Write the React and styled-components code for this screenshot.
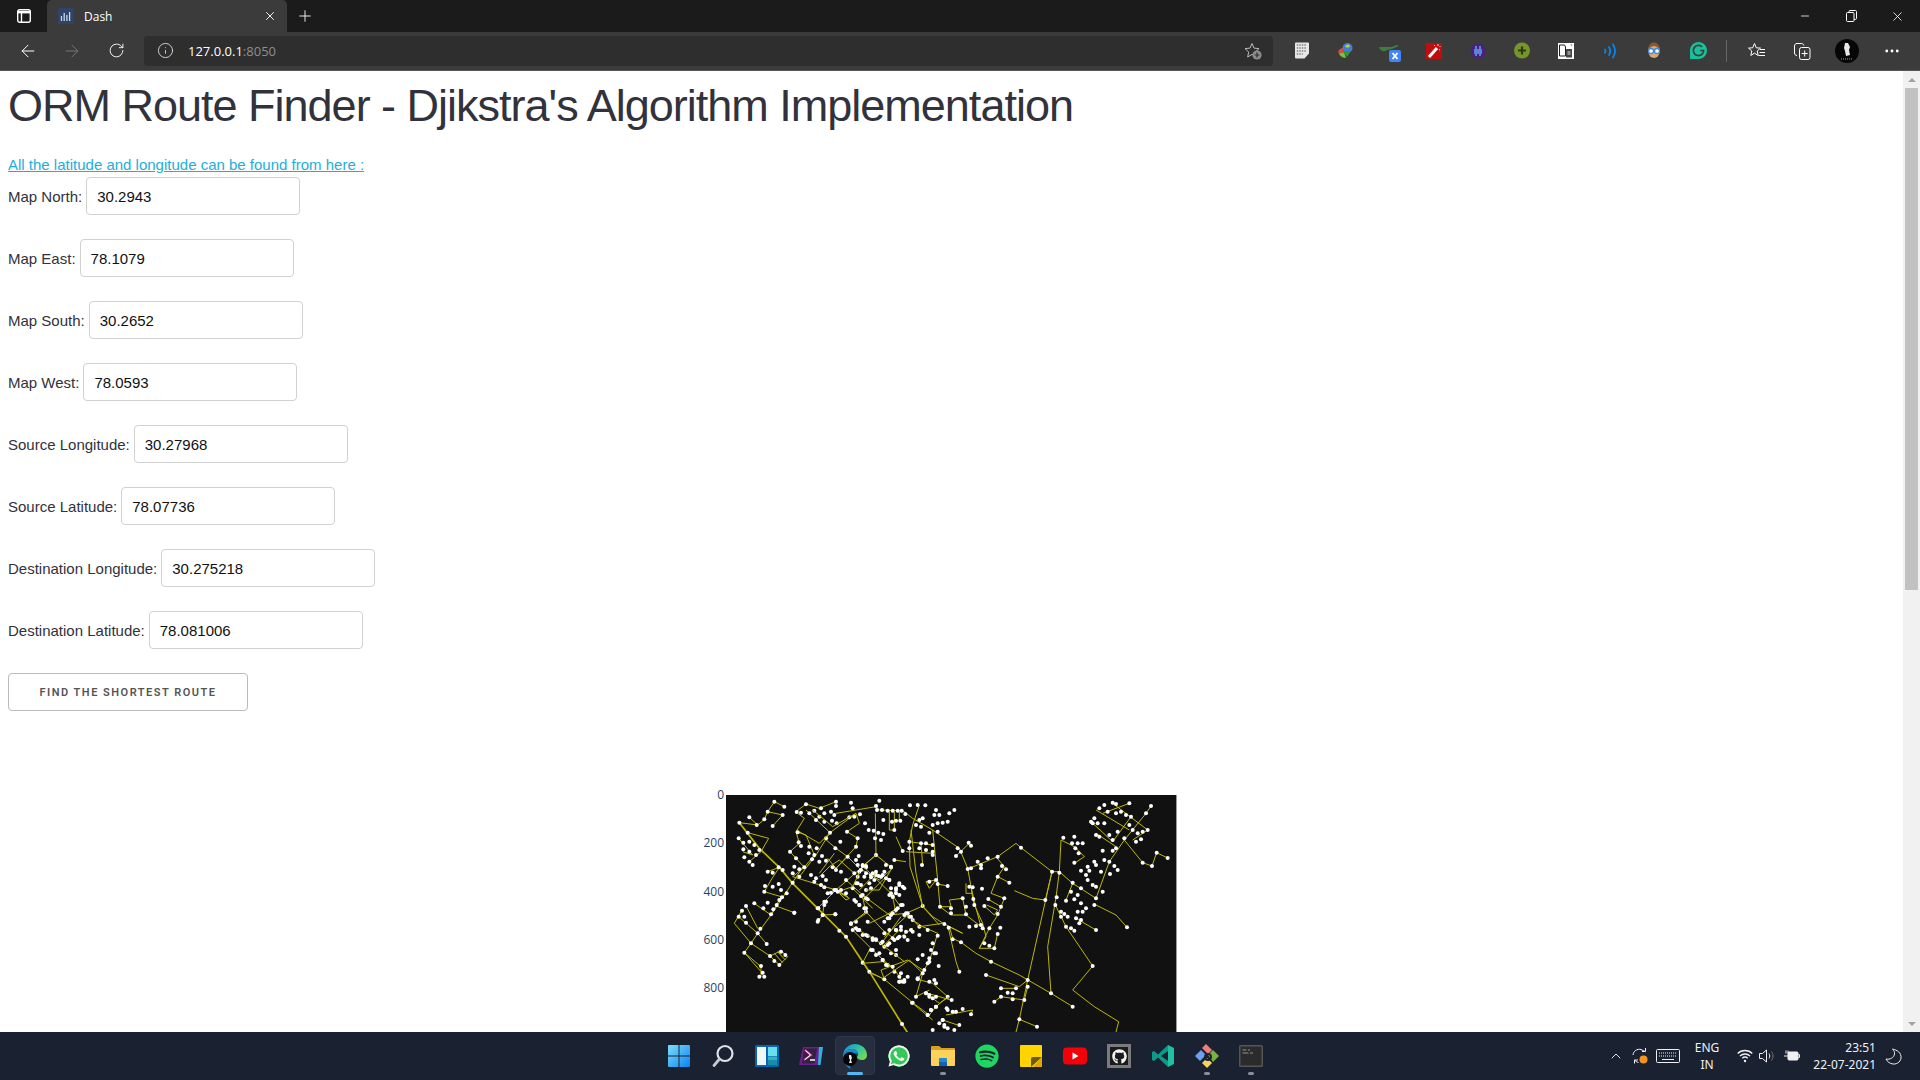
import React from "react";
import styled, { createGlobalStyle } from "styled-components";
import { ArrowLeft, ArrowRight, RotateCw, Info, Plus, X, Minus, MoreHorizontal, ChevronUp } from "lucide-react";
import { FaGithub, FaSpotify, FaWhatsapp } from "react-icons/fa";
import { SiGrammarly } from "react-icons/si";

const GlobalStyle = createGlobalStyle`
  html, body { margin: 0; padding: 0; height: 100%; overflow: hidden; }
  #root { height: 100%; }
  * { box-sizing: border-box; }
`;

const Screen = styled.div`
  width: 1920px;
  height: 1080px;
  display: flex;
  flex-direction: column;
  overflow: hidden;
  background: #fff;
  font-family: "Liberation Sans", Arial, sans-serif;
`;

/* browser chrome */
const TabStrip = styled.div`
  height: 32px;
  flex: none;
  display: flex;
  align-items: flex-end;
  background: #1b1b1b;
  color: #fff;
  font-family: "Open Sans", sans-serif;
`;

const SideToggle = styled.div`
  width: 47px;
  height: 32px;
  display: flex;
  align-items: center;
  justify-content: center;
`;

const Tab = styled.div`
  width: 240px;
  height: 32px;
  display: flex;
  align-items: center;
  padding: 0 10px 0 11px;
  background: #3b3b3b;
  border-radius: 5px 5px 0 0;
  font-size: 12px;
`;

const TabTitle = styled.span`
  margin-left: 10px;
  flex: 1;
`;

const NewTab = styled.div`
  width: 36px;
  height: 32px;
  display: flex;
  align-items: center;
  justify-content: center;
`;

const WindowControls = styled.div`
  margin-left: auto;
  height: 32px;
  display: flex;
  align-items: center;
`;

const WindowButton = styled.div`
  width: 46px;
  height: 32px;
  display: flex;
  align-items: center;
  justify-content: center;
`;

const Toolbar = styled.div`
  height: 39px;
  flex: none;
  display: flex;
  align-items: center;
  padding: 0 5px 1px 6px;
  background: #3b3b3b;
  border-bottom: 1px solid #555;
  font-family: "Open Sans", sans-serif;
`;

const NavButton = styled.div`
  width: 44px;
  height: 32px;
  display: flex;
  align-items: center;
  justify-content: center;
`;

const AddressBar = styled.div`
  width: 1129px;
  height: 30px;
  margin-left: 6px;
  display: flex;
  align-items: center;
  padding: 0 11px 0 13px;
  background: #2e2e2e;
  border-radius: 4px;
  font-size: 13px;
`;

const Host = styled.span`
  margin-left: 14px;
  color: #fff;
`;

const Port = styled.span`
  color: #8f8f8f;
  flex: 1;
`;

const Extensions = styled.div`
  display: flex;
  align-items: center;
  margin-left: 7px;
`;

const ExtButton = styled.div`
  width: ${(p) => (p.$wide ? "45px" : "44px")};
  height: 32px;
  display: flex;
  align-items: center;
  justify-content: center;
`;

const Divider = styled.div`
  width: 1px;
  height: 22px;
  margin: 0 7px 0 6px;
  background: #666;
`;

/* page */
const Viewport = styled.div`
  flex: 1;
  min-height: 0;
  display: flex;
`;

const Page = styled.main`
  flex: 1;
  min-width: 0;
  overflow: hidden;
  padding: 8px 8px 0;
  color: rgb(50, 50, 60);
`;

const Title = styled.h1`
  margin: 0 0 20px;
  font-size: 45px;
  font-weight: 400;
  line-height: 54px;
  letter-spacing: -1px;
  white-space: nowrap;
`;

const SourceLink = styled.a`
  display: block;
  font-size: 15px;
  line-height: 24px;
  color: #1eaedb;
  text-decoration: underline;
`;

const CoordForm = styled.form`
  display: flex;
  flex-direction: column;
  align-items: flex-start;
  gap: 24px;
`;

const Field = styled.label`
  display: flex;
  align-items: center;
  gap: 4px;
  font-size: 15px;
`;

const Input = styled.input`
  width: 214px;
  height: 38px;
  padding: 6px 10px;
  border: 1px solid #d1d1d1;
  border-radius: 4px;
  background: #fff;
  color: #111;
  font: 15px "Liberation Sans", Arial, sans-serif;
`;

const Submit = styled.button`
  width: 240px;
  height: 38px;
  padding: 1px 0 0;
  border: 1px solid #bbb;
  border-radius: 4px;
  background: transparent;
  color: #555;
  font: 600 11px "Roboto", "Liberation Sans", sans-serif;
  letter-spacing: 1.5px;
  text-transform: uppercase;
`;

const ChartRow = styled.section`
  margin-top: 84px;
  display: grid;
  grid-template-columns: 1fr 451px 1fr;
`;

const YAxis = styled.div`
  justify-self: end;
  margin: -8px 2px 0 0;
  display: flex;
  flex-direction: column;
  align-items: flex-end;
  gap: 32.3px;
  font: 12px/16px "Open Sans", sans-serif;
  color: #2a3f5f;
`;

const MapFrame = styled.div`
  width: 451px;
  height: 450px;
  background: #111;
  border-right: 1px solid #999;
`;

/* fake scrollbar */
const ScrollBar = styled.div`
  width: 17px;
  flex: none;
  display: flex;
  flex-direction: column;
  align-items: center;
  background: #f1f1f1;
`;

const ScrollArrow = styled.div`
  height: 17px;
  flex: none;
  display: flex;
  align-items: center;
  justify-content: center;
`;

const Triangle = styled.span`
  width: 0;
  height: 0;
  border-left: 4px solid transparent;
  border-right: 4px solid transparent;
  border-${(p) => (p.$down ? "top" : "bottom")}: 4px solid #a3a3a3;
`;

const ScrollThumb = styled.div`
  width: 13px;
  height: 502px;
  background: #c1c1c1;
`;

const ScrollSpace = styled.div`
  flex: 1;
`;

/* taskbar */
const Taskbar = styled.footer`
  height: 48px;
  flex: none;
  display: flex;
  align-items: center;
  padding: 0 10px 0 657px;
  background: #1a2232;
  color: #fff;
  font-family: "Noto Sans", sans-serif;
`;

const TaskIcon = styled.div`
  position: relative;
  width: 44px;
  height: 48px;
  display: flex;
  align-items: center;
  justify-content: center;
  &::before {
    content: "";
    display: ${(p) => (p.$active ? "block" : "none")};
    position: absolute;
    inset: 4px 2px 5px 2px;
    background: #262e3f;
    border: 1px solid #2d3546;
    border-radius: 4px;
  }
  &::after {
    content: "";
    display: ${(p) => (p.$running || p.$active ? "block" : "none")};
    position: absolute;
    left: 50%;
    bottom: 5px;
    width: ${(p) => (p.$active ? "16px" : "6px")};
    height: 3px;
    margin-left: ${(p) => (p.$active ? "-8px" : "-3px")};
    border-radius: 2px;
    background: ${(p) => (p.$active ? "#4fb8f5" : "#8b8f98")};
  }
  & > * {
    position: relative;
  }
`;

const WhatsAppBadge = styled.div`
  width: 24px;
  height: 24px;
  display: flex;
  border-radius: 50%;
  background: radial-gradient(circle, #35c75a 62%, transparent 64%);
  color: #f3f3f3;
`;

const GithubTile = styled.div`
  width: 24px;
  height: 24px;
  display: flex;
  align-items: center;
  justify-content: center;
  background: #1b1b1b;
  border: 3px solid #7b7b7b;
  color: #f4f4f4;
`;

const Tray = styled.div`
  margin-left: auto;
  height: 48px;
  display: flex;
  align-items: center;
`;

const TraySlot = styled.div`
  width: ${(p) => p.$w}px;
  display: flex;
  align-items: center;
  justify-content: center;
`;

const TrayText = styled.div`
  width: ${(p) => p.$w}px;
  display: flex;
  flex-direction: column;
  align-items: ${(p) => p.$align};
  font-size: 12px;
  line-height: 17px;
  color: #f0f0f0;
`;

/* icons */
const SideIcon = () => (
  <svg width="16" height="16" viewBox="0 0 16 16" fill="none" stroke="#fff" strokeWidth="1.4">
    <rect x="1.7" y="1.7" width="12.6" height="12.6" rx="2" />
    <path d="M1.7 4.2h12.6" strokeWidth="2.4" />
    <path d="M5.5 4v10" />
  </svg>
);

const Favicon = () => (
  <svg width="16" height="16" viewBox="0 0 16 16">
    <rect width="16" height="16" rx="1.5" fill="#2f4468" />
    <path d="M3.5 8v5M6.2 5v8M8.9 7v6M11.6 4v9" stroke="#c8d4ea" strokeWidth="1.3" />
  </svg>
);

const RestoreIcon = () => (
  <svg width="11" height="12" viewBox="0 0 11 12" fill="none" stroke="#fff" strokeWidth="1">
    <rect x="0.5" y="2.5" width="7.5" height="9" rx="1" />
    <path d="M3 2.4V1.6C3 1 3.4.5 4 .5h5.5c.6 0 1 .5 1 1.1v6.8c0 .6-.4 1-1 1H8" />
  </svg>
);

const FavAddIcon = () => (
  <svg width="18" height="18" viewBox="0 0 18 18" fill="none">
    <path d="M8 1.5l2 4.6 5 .5-3.7 3.4 1 5-4.3-2.6-4.3 2.6 1-5L1 6.6l5-.5z" stroke="#bcbcbc" strokeWidth="1" />
    <circle cx="13" cy="13" r="4.6" fill="#8c8c8c" />
    <path d="M13 10.6v4.8M10.6 13h4.8" stroke="#2e2e2e" strokeWidth="1.2" />
  </svg>
);

const BinaryDoc = () => (
  <svg width="16" height="17" viewBox="0 0 16 17">
    <path d="M1 1.5a1 1 0 011-1h12a1 1 0 011 1v10l-4.5 5H2a1 1 0 01-1-1z" fill="#e6e6e6" />
    <path d="M2.8 3h10M2.8 6h10M2.8 9h10M2.8 12h6" stroke="#555" strokeWidth="1.2" strokeDasharray="1.5 1" />
  </svg>
);

const IdmIcon = () => (
  <svg width="18" height="18" viewBox="0 0 18 18">
    <path d="M1 10c1-3 3-4 5-4v8c-2 0-4-2-5-4z" fill="#e0483a" />
    <path d="M2 12c2 3 5 4 7 4l-2-6z" fill="#7cc242" />
    <circle cx="10.5" cy="6" r="5" fill="#4a7ccb" />
    <path d="M8 4c2-2 4-2 5 0-1 2-4 2-5 0z" fill="#a8d84e" />
    <path d="M5 9h9l-4 6z" fill="#2f9a3a" />
  </svg>
);

const GlassesIcon = () => (
  <svg width="24" height="24" viewBox="0 0 24 24">
    <path d="M1 8c1 4 5 6 8 3l5-1 7-3-2-1-6 2H6z" fill="#3f7d3e" />
    <rect x="11" y="11" width="12" height="12" rx="2" fill="#4285f4" />
    <path d="M14.5 14l5 6M19.5 14l-5 6" stroke="#fff" strokeWidth="1.8" />
  </svg>
);

const WandIcon = () => (
  <svg width="16" height="16" viewBox="0 0 16 16">
    <rect width="16" height="16" fill="#c00d0d" />
    <path d="M3 14L11 5" stroke="#fff" strokeWidth="3" />
    <path d="M12 1v2M14.5 3l-1 1M8 2l1 1M14 7l-1-.5" stroke="#f4d0d0" strokeWidth="1" />
  </svg>
);

const PurpleExt = () => (
  <svg width="16" height="16" viewBox="0 0 16 16">
    <circle cx="8" cy="8" r="7.5" fill="#4a2080" />
    <path d="M4 6h8v5H4z" fill="#5a83d6" />
    <path d="M6 3v10M10 3v10" stroke="#5a83d6" strokeWidth="2" />
  </svg>
);

const GreenPlus = () => (
  <svg width="16" height="17" viewBox="0 0 16 17">
    <circle cx="8" cy="8.5" r="8" fill="#77962a" />
    <path d="M8 4.5v8M4 8.5h8" stroke="#2d3a12" strokeWidth="2.2" />
  </svg>
);

const DocsExt = () => (
  <svg width="16" height="16" viewBox="0 0 16 16">
    <rect width="16" height="16" fill="#fff" />
    <path d="M1.5 2h5l1 2v9h-6z" fill="#fff" stroke="#222" />
    <path d="M8 6h6v8.5H8z" fill="#444" />
    <path d="M9.5 9h3M9.5 11h3" stroke="#ddd" />
    <path d="M13 1l1 2" stroke="#c9964a" strokeWidth="1.3" />
  </svg>
);

const WavesIcon = () => (
  <svg width="16" height="16" viewBox="0 0 16 16" fill="none" stroke="#0a86e8" strokeWidth="1.8" strokeLinecap="round">
    <path d="M3 6.5c.7 1 .7 2.2 0 3.2" />
    <path d="M7 4c1.6 2.5 1.6 5.5 0 8" />
    <path d="M11 1.5c2.6 4 2.6 9 0 13" />
  </svg>
);

const FaceExt = () => (
  <svg width="16" height="17" viewBox="0 0 16 17">
    <path d="M2 8C2 3 5 .5 8 .5S14 3 14 8z" fill="#8a5a2b" />
    <ellipse cx="8" cy="10" rx="5.5" ry="6" fill="#e0a878" />
    <circle cx="5" cy="9" r="2.5" fill="#fff" stroke="#3a8de0" strokeWidth="1.3" />
    <circle cx="11" cy="9" r="2.5" fill="#fff" stroke="#3a8de0" strokeWidth="1.3" />
  </svg>
);

const GrammarlyIcon = () => <SiGrammarly size={17} color="#15c39a" />;

const FavoritesIcon = () => (
  <svg width="18" height="18" viewBox="0 0 18 18" fill="none" stroke="#fff" strokeWidth="1">
    <path d="M6.5 1.5l1.8 4.3 4.2.3-3.300 2.900 1 4.500-3.700-2.400-3.700 2.400 1-4.500L.5 6.100l4.200-.3z" />
    <path d="M12 7.500h5M11.500 10.500h5.500M10.500 13.500h6.500" />
  </svg>
);

const CollectionsIcon = () => (
  <svg width="18" height="18" viewBox="0 0 18 18" fill="none" stroke="#fff" strokeWidth="1">
    <path d="M4 13.5c-1.5 0-2.5-1-2.5-2.5V4c0-1.500 1-2.500 2.500-2.500h4.500c1.200 0 2 .7 2.300 2" />
    <rect x="6.5" y="5.5" width="10.5" height="12" rx="2" />
    <path d="M11.700 8.500v6M8.700 11.500h6" />
  </svg>
);

const Avatar = () => (
  <svg width="24" height="24" viewBox="0 0 24 24">
    <circle cx="12" cy="12" r="12" fill="#060606" />
    <path d="M10 4l3 0 2 4-1 3 1 5-4 1-1-5-1-3z" fill="#e8e8e8" />
    <path d="M6 20h12" stroke="#999" strokeWidth="1" strokeDasharray="1 1" />
  </svg>
);

const WindowsLogo = () => (
  <svg width="24" height="24" viewBox="0 0 24 24">
    <defs>
      <linearGradient id="win" x1="0" y1="0" x2="1" y2="1">
        <stop offset="0" stopColor="#7fdcff" />
        <stop offset="1" stopColor="#0a84f0" />
      </linearGradient>
    </defs>
    <path d="M1 2a1 1 0 011-1h9.500v10.500H1zM12.500 1H22a1 1 0 011 1v9.500H12.500zM1 12.500h10.500V23H2a1 1 0 01-1-1zM12.500 12.500H23V22a1 1 0 01-1 1h-9.500z" fill="url(#win)" />
  </svg>
);

const SearchIcon = () => (
  <svg width="24" height="24" viewBox="0 0 24 24" fill="none">
    <circle cx="14" cy="9.5" r="7.5" stroke="#dfe3e8" strokeWidth="2.2" />
    <path d="M8.5 15l-5.500 6.500" stroke="#c6cad0" strokeWidth="2.8" strokeLinecap="round" />
  </svg>
);

const WidgetsIcon = () => (
  <svg width="24" height="24" viewBox="0 0 24 24">
    <rect width="24" height="22" y="1" rx="1.5" fill="#0b63b6" />
    <rect x="2" y="3" width="9" height="18" fill="#eef5fb" />
    <rect x="13" y="3" width="9" height="9" fill="#66e0ea" />
    <rect x="13" y="12.5" width="9" height="4" fill="#2fb4bf" />
    <rect x="13" y="17" width="9" height="4" fill="#15909e" />
  </svg>
);

const TerminalIcon = () => (
  <svg width="24" height="24" viewBox="0 0 24 24">
    <path d="M4 3h20l-3 18H0z" fill="#6b1f8e" />
    <path d="M5 4.5h13L15.5 19.5H3z" fill="#2f2340" />
    <path d="M6 6l6 5-7 5" fill="none" stroke="#e83fa0" strokeWidth="2" />
    <path d="M6.5 6.5l5 4.500-5.500 4.500" fill="none" stroke="#fff" strokeWidth="1" />
    <path d="M11 16h5" stroke="#fff" strokeWidth="1.5" />
    <path d="M20 3h4l-2.500 18H19z" fill="#2db4d8" />
  </svg>
);

const EdgeIcon = () => (
  <svg width="26" height="26" viewBox="0 0 26 26">
    <defs>
      <linearGradient id="edgeA" x1="0" y1="0" x2="1" y2="0.8">
        <stop offset="0" stopColor="#1a88d8" />
        <stop offset="0.55" stopColor="#2fc7a0" />
        <stop offset="1" stopColor="#7ad94c" />
      </linearGradient>
    </defs>
    <path d="M1 12C2 5 7 1 13 1c7 0 12 5 12 11 0 3-2 5-5 5-3 0-5-1-5-3 0-1 1-1 1-3 0-3-3-5-6-5-5 0-8 3-9 6z" fill="url(#edgeA)" />
    <path d="M1 12c1-4 5-6 9-6 3 0 6 2 6 5-2-1-5-1-7 1-2 2-2 6 0 9-1 2-2 4 1 5-6-1-9-7-9-14z" fill="#1a88d8" />
    <g transform="translate(1 9)">
      <circle cx="7" cy="7" r="7" fill="#060606" />
      <path d="M6 3h2l1 3-1 2 1 3H6l1-3-1-2z" fill="#e8e8e8" />
    </g>
  </svg>
);

const FolderIcon = () => (
  <svg width="24" height="24" viewBox="0 0 24 24">
    <path d="M0 3a1 1 0 011-1h7l2.500 2H23a1 1 0 011 1v2H0z" fill="#d9a01f" />
    <path d="M0 6h24v15a1 1 0 01-1 1H1a1 1 0 01-1-1z" fill="#fcd25b" />
    <path d="M8 15a1 1 0 011-1h6a1 1 0 011 1v7H8z" fill="#1f88d8" />
    <rect x="8" y="18" width="8" height="4" fill="#0f66b5" />
  </svg>
);

const NotesIcon = () => (
  <svg width="22" height="22" viewBox="0 0 22 22">
    <rect width="22" height="22" rx="1" fill="#ffd400" />
    <path d="M11 22V14a2 2 0 012-2h9z" fill="#6e5a18" />
    <path d="M13 22l9-10v9a1 1 0 01-1 1z" fill="#e3a800" />
  </svg>
);

const YoutubeIcon = () => (
  <svg width="24" height="18" viewBox="0 0 24 18">
    <rect width="24" height="17" y=".5" rx="4" fill="#f40009" />
    <path d="M9.500 5.500v7l6-3.500z" fill="#fff" />
  </svg>
);

const VscodeIcon = () => (
  <svg width="24" height="24" viewBox="0 0 24 24">
    <path d="M17 1L7 10.5 3 7 1 8v8l2 1 4-3.500L17 23v-6l-7-5 7-5z" fill="#0d9a88" />
    <path d="M17 1l6 3v16l-6 3z" fill="#20c0a4" />
  </svg>
);

const GitGraphIcon = () => (
  <svg width="26" height="26" viewBox="0 0 26 26">
    <path d="M8 5l4-4 6 6-4 4z" fill="#ef7d7d" />
    <path d="M1 13l6-6 5 5-6 6z" fill="#6aa0f0" />
    <path d="M14 12l5-5 6 6-6 6z" fill="#78b33e" />
    <path d="M8 20l5-5 5 5-5 5z" fill="#f4d35e" />
    <circle cx="14" cy="14" r="3" fill="none" stroke="#1a2232" strokeWidth="2" />
  </svg>
);

const ConsoleIcon = () => (
  <svg width="24" height="22" viewBox="0 0 24 22">
    <rect width="24" height="22" rx="1.5" fill="#555" />
    <rect x="1.5" y="1.5" width="21" height="19" fill="#2b2b2b" />
    <path d="M3.500 5h4M9 5h2M3.500 8h6M11 8h3" stroke="#707070" strokeWidth="1.5" />
  </svg>
);

const SyncIcon = () => (
  <svg width="18" height="18" viewBox="0 0 18 18" fill="none" stroke="#f0f0f0" strokeWidth="1">
    <path d="M2 8c.5-4 4-6.500 8-5.500l4 2" />
    <path d="M14.500 1v3.500H11" />
    <path d="M3.500 16.500v-3.500H7M3.500 13c1 1 2 2 4 2.500" />
    <circle cx="12.5" cy="12.5" r="4" fill="#f7941d" stroke="none" />
  </svg>
);

const KeyboardIcon = () => (
  <svg width="24" height="14" viewBox="0 0 24 14" fill="none" stroke="#f0f0f0">
    <rect x=".5" y=".5" width="23" height="13" rx="1" />
    <path d="M3 4h18M3 7h18" strokeDasharray="1 1" />
    <path d="M6 10.500h12" />
  </svg>
);

const WifiIcon = () => (
  <svg width="16" height="14" viewBox="0 0 16 14" fill="none" stroke="#f0f0f0" strokeWidth="1.3">
    <path d="M.7 4.500c4-4 10.600-4 14.600 0" />
    <path d="M3 7c2.800-2.700 7.200-2.700 10 0" />
    <path d="M5.300 9.300c1.500-1.400 3.900-1.400 5.400 0" />
    <circle cx="8" cy="12" r="1.2" fill="#f0f0f0" stroke="none" />
  </svg>
);

const VolumeIcon = () => (
  <svg width="17" height="14" viewBox="0 0 17 14" fill="none" stroke="#f0f0f0">
    <path d="M.5 4.500h3L7.500 1v12l-4-3.500h-3z" />
    <path d="M10 4.500c1 1.500 1 3.500 0 5" />
    <path d="M12.500 2.500c2 2.800 2 6.200 0 9" stroke="#777" />
  </svg>
);

const BatteryIcon = () => (
  <svg width="16" height="14" viewBox="0 0 16 14" fill="none" stroke="#f0f0f0">
    <rect x="4" y="3" width="10" height="8" rx="1" fill="#f0f0f0" />
    <path d="M14.500 5.500h1v3h-1" />
    <path d="M0 7h4M2 1.500v3M4 1.500v3" />
  </svg>
);

const MoonIcon = () => (
  <svg width="17" height="17" viewBox="0 0 17 17" fill="none" stroke="#f0f0f0">
    <path d="M7.500 1c2 .5 8 2 8.500 7.500.5 4.500-3.500 8-8 7.500-3-.3-6-2.500-7-5 4 1 8-1.500 8.500-5C9.700 4 9 2.500 7.500 1z" />
  </svg>
);

/* road network traced off the chart, in 3x chart coordinates */
const ROADS = [
  "120,128 175,135 195,118 205,95 225,65 255,80",
  "150,112 175,135", "205,95 250,105 220,138",
  "145,158 208,175 185,215 150,245", "118,175 160,225 130,215",
  "205,275 240,262 215,300 195,335 245,350 215,405 175,460 155,490 135,518 185,560 185,590",
  "105,430 155,490", "125,395 105,430", "175,460 202,492",
  "155,490 212,528 240,555 265,530 245,512 212,528", "225,520 250,548", "235,515 258,540",
  "135,518 185,575", "230,378 285,398", "165,370 215,405", "215,405 310,262",
  "140,378 175,445", "118,410 175,460",
  "290,95 320,72 360,85 410,65", "410,100 530,80 540,90 610,92 640,115 700,150 780,205 805,265 815,320 820,355 825,375 850,430 860,470 840,505 870,505 885,505 895,460",
  "295,100 315,115 290,155 300,190 272,215 290,235 315,262 280,290 410,330 445,350 420,335",
  "290,155 320,165 345,225 315,262", "392,158 350,225 300,290", "392,158 320,90",
  "392,158 470,100 480,130 443,155 475,175 470,200 410,265",
  "375,175 410,205 445,230 410,265 385,235", "410,330 530,225 580,265 540,300 480,265 445,230",
  "410,330 375,365 355,385", "370,405 355,425", "370,405 408,403", "375,365 370,405",
  "490,345 570,405 620,400 670,378 700,410 735,432 790,460 750,440 760,475 785,487 830,520 875,545 960,585 1055,640 1120,680",
  "670,378 632,260 630,185 640,135 660,75", "630,185 700,195", "620,215 700,220", "665,190 670,255",
  "528,100 530,225", "570,95 570,150 590,150", "585,95 585,150", "600,95 600,125", "590,170 610,215", "585,240 620,245",
  "700,150 715,300 722,380 755,405 800,405 845,440 830,385 815,320", "715,312 745,318", "680,305 710,300 690,325 680,305",
  "722,380 755,380 750,360 790,355 800,405", "770,228 810,190", "800,310 800,340 820,340",
  "810,265 895,230 950,190 965,203 1058,275 1080,275 1120,310 1190,355",
  "890,230 915,260 895,290 930,308", "895,290 875,340 915,355 905,380 895,405 870,445 840,505",
  "865,357 905,380", "862,375 895,390 885,405 855,378", "945,332 1000,355 1038,360 1058,275",
  "1058,275 985,600 960,718 950,756", "1080,275 1070,352 1045,500 1055,640",
  "1080,275 1085,180 1125,200 1155,230 1125,250", "1068,375 1100,440 1180,558 1120,630 1185,680 1258,725 1250,756",
  "1275,180 1330,248 1358,258 1372,218 1405,234", "1190,375 1250,405 1283,442", "1130,415 1190,450",
  "1190,355 1230,245 1275,180 1340,100 1355,78", "1175,125 1240,185 1295,110", "1190,90 1290,150",
  "1240,70 1345,150 1300,180", "1210,100 1290,70", "1190,160 1250,200", "1120,310 1100,360",
  "860,585 960,620 985,600", "885,665 905,650 975,660 985,620", "905,625 950,625",
  "490,548 510,575 555,598 640,668 690,705 710,680 745,650 700,610 655,598 690,545 715,460 670,440 640,420",
  "555,598 545,570 625,540 670,570", "960,718 1013,740", "510,510 490,548",
  "455,432 500,395 550,450 590,480 640,445", "460,450 520,510 590,575 610,605",
  "510,430 560,405 610,375", "555,470 630,400", "600,310 580,350 590,400", "440,300 490,345",
  "460,325 520,385", "550,500 600,450", "740,705 820,690 815,703", "685,640 755,660", "650,650 690,630", "730,720 775,735",
  "745,435 770,545 780,575",
];

const DOTS =
  "225,65 255,80 205,95 250,105 150,112 195,118 120,128 172,135 220,138 145,158 118,175 132,188 150,185 165,195 180,210 132,208 150,215 170,225 135,232 150,245 160,255 " +
  "205,275 220,278 238,262 250,270 197,318 220,320 238,312 195,335 245,330 262,340 248,352 240,360 232,375 222,388 215,403 205,368 165,370 192,385 285,398 140,378 128,392 118,410 135,410 140,428 183,446 175,460 155,490 202,492 135,518 212,528 225,543 240,555 245,515 258,525 185,558 190,578 180,590 195,590 " +
  "292,96 305,98 320,73 330,100 345,92 365,85 375,100 360,110 350,120 410,65 410,78 395,95 405,105 375,125 398,122 412,130 455,68 460,85 465,110 450,112 482,103 530,78 540,62 533,90 548,90 565,92 580,92 595,92 607,92 632,76 618,102 552,120 578,125 590,122 603,122 585,150 497,130 508,150 523,152 537,158 552,162 527,175 545,180 392,158 443,155 423,185 380,175 408,205 475,175 470,200 295,157 298,187 272,215 305,198 330,200 328,220 352,205 345,225 338,238 290,235 368,228 380,242 360,245 " +
  "285,260 300,268 315,262 280,280 300,290 280,308 335,285 350,295 370,288 380,300 345,305 365,315 375,322 400,262 410,270 425,275 440,300 445,230 470,240 478,228 490,255 500,262 480,275 475,290 495,290 515,285 530,285 545,290 525,300 510,310 530,225 555,275 575,262 570,300 470,310 485,315 500,330 515,325 410,330 395,338 385,340 440,340 460,325 " +
  "375,365 355,385 370,405 355,425 408,403 490,345 505,358 470,365 480,375 500,385 600,310 610,320 590,325 575,325 570,345 580,350 590,340 610,375 595,385 575,405 565,415 555,425 620,400 630,410 670,378 " +
  "455,432 470,425 500,395 505,425 475,450 460,450 490,465 505,468 520,480 530,478 545,490 555,500 570,490 585,480 600,470 590,450 605,440 620,455 635,450 640,420 660,440 685,450 715,467 710,520 700,490 695,510 670,525 655,538 690,545 718,558 660,465 640,455 575,520 590,525 " +
  "520,510 540,520 550,540 565,555 585,575 600,590 610,605 600,605 615,600 490,548 510,575 555,598 625,590 655,598 675,570 690,605 710,610 705,600 680,640 690,650 710,650 745,650 757,660 640,668 685,705 695,690 710,680 742,685 770,695 790,687 815,703 730,720 735,735 745,745 765,750 780,735 608,732 700,750 " +
  "420,452 440,470 735,432 748,443 760,478 785,487 780,575 875,545 860,585 985,600 985,620 950,625 975,660 905,625 925,638 940,640 905,650 885,665 940,658 1055,640 1120,680 960,718 1013,740 1180,558 " +
  "660,120 650,135 665,140 670,115 655,75 678,76 710,90 705,105 720,105 750,100 765,90 745,125 730,128 715,130 700,135 690,158 715,155 630,185 665,190 680,190 700,195 610,213 630,205 660,205 680,210 700,215 700,225 668,255 585,240 " +
  "808,188 815,197 775,205 785,215 770,228 805,267 815,265 835,245 845,255 845,265 865,235 895,230 908,258 920,268 895,290 930,308 848,326 810,320 820,322 965,203 " +
  "690,305 710,300 715,312 745,318 722,380 755,385 755,400 790,355 800,380 822,357 825,375 800,403 810,440 830,438 845,435 850,445 855,378 867,357 915,355 905,380 895,402 870,445 903,443 895,462 855,490 870,497 885,505 " +
  "1038,360 1058,275 1080,278 1072,352 1068,375 1092,173 1125,170 1118,190 1135,190 1150,190 1128,205 1138,220 1125,248 1145,272 1165,260 1170,272 1160,285 1185,245 1190,255 1210,212 1230,245 1215,240 1245,258 1255,270 1232,282 1205,275 1120,308 1100,362 1165,300 1180,315 1190,320 1145,325 1115,335 1135,345 1125,358 1145,370 1160,385 1135,395 1150,395 1190,355 1210,335 1185,375 1085,395 1095,402 1105,410 1085,410 1130,415 1145,420 1100,440 1115,445 1125,452 1140,430 1190,450 1283,442 " +
  "1175,125 1185,115 1200,85 1215,75 1240,68 1250,72 1290,70 1225,95 1250,100 1265,95 1280,105 1340,100 1355,78 1180,130 1195,130 1215,130 1190,165 1200,170 1230,165 1240,180 1255,155 1275,175 1250,205 1240,212 1310,185 1325,178 1345,150 1300,150 1315,160 1330,155 1295,110 1290,135 1330,248 1358,258 1372,218 1405,234";

/* second pass over the dense middle of the map, read off the closer crop */
const CORE_ROADS = [
  "355,305 390,325 380,330 360,310", "430,228 400,290 355,305", "520,230 480,300 440,300",
  "470,195 430,228 515,310 540,345", "560,370 600,410 670,400", "395,400 440,370 430,320",
  "400,410 470,450 555,515", "490,455 545,380", "430,520 490,515 520,530",
  "450,548 490,565 570,510 610,550 590,620", "580,640 640,690", "620,610 660,640 690,620",
  "405,250 360,210 330,230 300,260", "240,125 300,160 330,130", "280,60 340,110 410,70",
  "575,120 590,250 610,350 660,405", "420,300 470,250", "440,320 500,260", "300,250 345,190",
];

const CORE_DOTS =
  "355,305 345,300 365,300 320,335 315,345 297,355 310,375 297,390 348,373 225,368 " +
  "430,228 440,228 415,225 425,240 405,250 415,280 440,250 460,250 470,245 455,262 478,258 490,255 500,265 510,270 515,230 500,225 " +
  "425,318 440,325 405,330 420,345 435,355 510,385 520,370 530,360 545,345 555,375 565,370 575,380 515,310 530,300 540,285 555,295 520,320 540,315 " +
  "395,400 410,415 420,420 440,435 460,445 470,450 490,455 505,465 530,480 495,430 510,420 530,420 545,420 555,440 565,450 535,445 520,445 " +
  "455,480 470,495 490,510 500,525 520,530 545,550 555,575 540,575 595,565 610,550 625,520 630,505 645,490 " +
  "620,610 630,615 640,625 590,620 578,638 650,650 635,660 625,675 670,690 685,660 700,665 660,700 675,710";

const toPoints = (s) => s.trim().split(/\s+/).map((p) => p.split(","));

const RoadLayer = ({ roads, dots, shift }) => (
  <g transform={shift}>
    <g fill="none" stroke="#bdb800" strokeWidth="3" strokeLinejoin="round">
      {roads.map((r) => (
        <polyline key={r} points={r} />
      ))}
    </g>
    <g fill="#fff">
      {toPoints(dots).map(([x, y], i) => (
        <circle key={i} cx={x} cy={y} r="6" />
      ))}
    </g>
  </g>
);

const RoadMap = () => (
  <svg width="450" height="450" viewBox="80 45 1350 1350">
    <polyline
      points="120,128 180,205 240,262 280,310 355,385 440,470 510,575 608,732 626,760"
      fill="none"
      stroke="#bdb800"
      strokeWidth="5"
    />
    <RoadLayer roads={ROADS} dots={DOTS} />
    <RoadLayer roads={CORE_ROADS} dots={CORE_DOTS} shift="translate(60 30)" />
  </svg>
);

const FIELDS = [
  ["Map North", "30.2943"],
  ["Map East", "78.1079"],
  ["Map South", "30.2652"],
  ["Map West", "78.0593"],
  ["Source Longitude", "30.27968"],
  ["Source Latitude", "78.07736"],
  ["Destination Longitude", "30.275218"],
  ["Destination Latitude", "78.081006"],
];

const EXTENSIONS = [BinaryDoc, IdmIcon, GlassesIcon, WandIcon, PurpleExt, GreenPlus, DocsExt, WavesIcon, FaceExt, GrammarlyIcon];

const App = () => {
  return (
    <Screen>
      <GlobalStyle />
      <TabStrip>
        <SideToggle>
          <SideIcon />
        </SideToggle>
        <Tab>
          <Favicon />
          <TabTitle>Dash</TabTitle>
          <X size={14} color="#fff" strokeWidth={1.6} />
        </Tab>
        <NewTab>
          <Plus size={18} color="#fff" strokeWidth={1.2} />
        </NewTab>
        <WindowControls>
          <WindowButton>
            <Minus size={12} color="#fff" strokeWidth={1.6} />
          </WindowButton>
          <WindowButton>
            <RestoreIcon />
          </WindowButton>
          <WindowButton>
            <X size={15} color="#fff" strokeWidth={1.3} />
          </WindowButton>
        </WindowControls>
      </TabStrip>
      <Toolbar>
        <NavButton>
          <ArrowLeft size={20} color="#fff" strokeWidth={1.2} />
        </NavButton>
        <NavButton>
          <ArrowRight size={20} color="#777" strokeWidth={1.2} />
        </NavButton>
        <NavButton>
          <RotateCw size={17} color="#fff" strokeWidth={1.3} />
        </NavButton>
        <AddressBar>
          <Info size={17} color="#e6e6e6" strokeWidth={1.2} />
          <Host>127.0.0.1</Host>
          <Port>:8050</Port>
          <FavAddIcon />
        </AddressBar>
        <Extensions>
          {EXTENSIONS.map((Icon, i) => (
            <ExtButton key={i}>
              <Icon />
            </ExtButton>
          ))}
          <Divider />
          <ExtButton $wide>
            <FavoritesIcon />
          </ExtButton>
          <ExtButton $wide>
            <CollectionsIcon />
          </ExtButton>
          <ExtButton $wide>
            <Avatar />
          </ExtButton>
          <ExtButton $wide>
            <MoreHorizontal size={18} color="#fff" strokeWidth={1.8} />
          </ExtButton>
        </Extensions>
      </Toolbar>
      <Viewport>
        <Page>
          <Title>ORM Route Finder - Djikstra's Algorithm Implementation</Title>
          <SourceLink href="#">All the latitude and longitude can be found from here :</SourceLink>
          <CoordForm>
            {FIELDS.map(([label, value]) => (
              <Field key={label}>
                {label}:
                <Input defaultValue={value} />
              </Field>
            ))}
            <Submit type="button">Find the shortest route</Submit>
          </CoordForm>
          <ChartRow>
            <YAxis>
              <span>0</span>
              <span>200</span>
              <span>400</span>
              <span>600</span>
              <span>800</span>
            </YAxis>
            <MapFrame>
              <RoadMap />
            </MapFrame>
          </ChartRow>
        </Page>
        <ScrollBar>
          <ScrollArrow>
            <Triangle />
          </ScrollArrow>
          <ScrollThumb />
          <ScrollSpace />
          <ScrollArrow>
            <Triangle $down />
          </ScrollArrow>
        </ScrollBar>
      </Viewport>
      <Taskbar>
        <TaskIcon><WindowsLogo /></TaskIcon>
        <TaskIcon><SearchIcon /></TaskIcon>
        <TaskIcon><WidgetsIcon /></TaskIcon>
        <TaskIcon><TerminalIcon /></TaskIcon>
        <TaskIcon $active><EdgeIcon /></TaskIcon>
        <TaskIcon>
          <WhatsAppBadge>
            <FaWhatsapp size={24} />
          </WhatsAppBadge>
        </TaskIcon>
        <TaskIcon $running><FolderIcon /></TaskIcon>
        <TaskIcon><FaSpotify size={24} color="#1ed760" /></TaskIcon>
        <TaskIcon><NotesIcon /></TaskIcon>
        <TaskIcon><YoutubeIcon /></TaskIcon>
        <TaskIcon>
          <GithubTile>
            <FaGithub size={15} />
          </GithubTile>
        </TaskIcon>
        <TaskIcon><VscodeIcon /></TaskIcon>
        <TaskIcon $running><GitGraphIcon /></TaskIcon>
        <TaskIcon $running><ConsoleIcon /></TaskIcon>
        <Tray>
          <TraySlot $w={16}>
            <ChevronUp size={16} color="#f0f0f0" strokeWidth={1.4} />
          </TraySlot>
          <TraySlot $w={32}>
            <SyncIcon />
          </TraySlot>
          <TraySlot $w={24}>
            <KeyboardIcon />
          </TraySlot>
          <TrayText $w={54} $align="center">
            <span>ENG</span>
            <span>IN</span>
          </TrayText>
          <TraySlot $w={22}>
            <WifiIcon />
          </TraySlot>
          <TraySlot $w={22}>
            <VolumeIcon />
          </TraySlot>
          <TraySlot $w={28}>
            <BatteryIcon />
          </TraySlot>
          <TrayText $w={70} $align="flex-end">
            <span>23:51</span>
            <span>22-07-2021</span>
          </TrayText>
          <TraySlot $w={34}>
            <MoonIcon />
          </TraySlot>
        </Tray>
      </Taskbar>
    </Screen>
  );
};

export default App;
